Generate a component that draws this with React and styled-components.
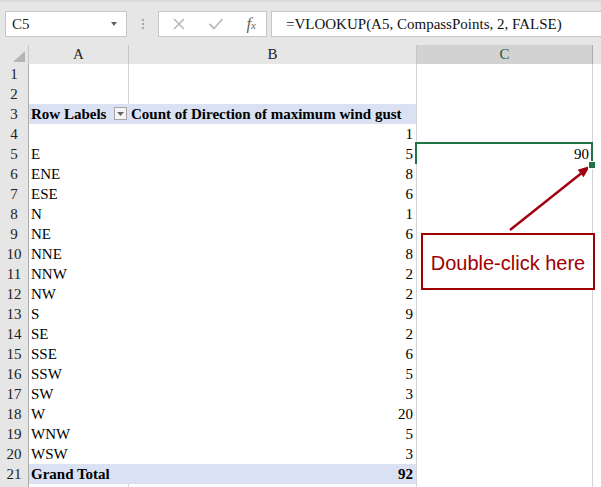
import React from "react";
import styled, { createGlobalStyle } from "styled-components";

const GlobalStyle = createGlobalStyle`
  html, body {
    margin: 0;
    padding: 0;
    background: #e6e6e6;
    overflow: hidden;
  }
  body {
    font-family: "Liberation Serif", "Times New Roman", serif;
  }
`;

const rows = [
  ["", 1],
  ["E", 5],
  ["ENE", 8],
  ["ESE", 6],
  ["N", 1],
  ["NE", 6],
  ["NNE", 8],
  ["NNW", 2],
  ["NW", 2],
  ["S", 9],
  ["SE", 2],
  ["SSE", 6],
  ["SSW", 5],
  ["SW", 3],
  ["W", 20],
  ["WNW", 5],
  ["WSW", 3],
];

const App = () => {
  return (
    <Page>
      <GlobalStyle />
      <FormulaBar>
        <NameBox>
          C5
          <Caret />
        </NameBox>
        <Grip>
          <i />
          <i />
          <i />
        </Grip>
        <Buttons>
          <svg width="14" height="14" viewBox="0 0 14 14">
            <path d="M2 2 L12 12 M12 2 L2 12" stroke="#b9b9b9" strokeWidth="1.6" />
          </svg>
          <svg width="16" height="14" viewBox="0 0 16 14">
            <path d="M1.5 7 L6 11.5 L14.5 2" stroke="#b9b9b9" strokeWidth="1.8" fill="none" />
          </svg>
          <Fx>
            f<sub>x</sub>
          </Fx>
        </Buttons>
        <Formula>=VLOOKUP(A5, CompassPoints, 2, FALSE)</Formula>
      </FormulaBar>

      <Sheet>
        <HeaderRow>
          <Corner>
            <svg width="12" height="11" viewBox="0 0 12 11">
              <polygon points="12,0 12,11 0,11" fill="#b5b5b5" />
            </svg>
          </Corner>
          <ColHead>A</ColHead>
          <ColHead>B</ColHead>
          <ColHead $active>C</ColHead>
          <ColHead $last />
        </HeaderRow>

        <Row>
          <RowHead>1</RowHead>
          <Cell />
          <Cell />
          <Cell />
          <Cell $last />
        </Row>
        <Row>
          <RowHead>2</RowHead>
          <Cell />
          <Cell />
          <Cell />
          <Cell $last />
        </Row>
        <Row>
          <RowHead>3</RowHead>
          <Cell $band $bold $noRight $blueBottom>
            Row Labels
            <FilterButton>
              <svg width="7" height="4" viewBox="0 0 7 4">
                <polygon points="0,0 7,0 3.5,4" fill="#666" />
              </svg>
            </FilterButton>
          </Cell>
          <Cell $band $bold $blueBottom>
            Count of Direction of maximum wind gust
          </Cell>
          <Cell />
          <Cell $last />
        </Row>

        {rows.map(([label, count], i) => {
          const n = i + 4;
          const lastPivot = n === 20;
          return (
            <Row key={n}>
              <RowHead>{n}</RowHead>
              <Cell $noRight $noBottom={!lastPivot} $blueBottom={lastPivot}>
                {label}
              </Cell>
              <Cell $right $noBottom={!lastPivot} $blueBottom={lastPivot}>
                {count}
              </Cell>
              {n === 5 ? (
                <Cell $right $selected>
                  90
                  <FillHandle />
                </Cell>
              ) : (
                <Cell />
              )}
              <Cell $last />
            </Row>
          );
        })}

        <Row>
          <RowHead>21</RowHead>
          <Cell $band $bold $noRight>
            Grand Total
          </Cell>
          <Cell $band $bold $right>
            92
          </Cell>
          <Cell />
          <Cell $last />
        </Row>
        <Row>
          <RowHead />
          <Cell />
          <Cell />
          <Cell />
          <Cell $last />
        </Row>
      </Sheet>

      <Arrow width="601" height="487" viewBox="0 0 601 487">
        <line x1="510" y1="230" x2="581" y2="173.5" stroke="#a00010" strokeWidth="2.4" />
        <polygon points="590,166 583.6,177.2 577.6,169.8" fill="#a00010" />
      </Arrow>
      <Callout>Double-click here</Callout>
    </Page>
  );
};

const Page = styled.div`
  position: relative;
  width: 601px;
  height: 487px;
  overflow: hidden;
  background: #e6e6e6;
`;

const FormulaBar = styled.div`
  display: flex;
  align-items: center;
  height: 45px;
  padding-left: 5px;
  box-sizing: border-box;
  border-top: 2px solid #dadada;
`;

const NameBox = styled.div`
  position: relative;
  width: 122px;
  height: 26px;
  box-sizing: border-box;
  background: #fff;
  border: 1px solid #c6c6c6;
  padding-left: 6px;
  font-size: 15px;
  line-height: 24px;
  color: #222;
`;

const Caret = styled.span`
  position: absolute;
  right: 9px;
  top: 10px;
  border-left: 3.5px solid transparent;
  border-right: 3.5px solid transparent;
  border-top: 4px solid #606060;
`;

const Grip = styled.div`
  display: flex;
  flex-direction: column;
  gap: 2px;
  width: 31px;
  align-items: center;
  i {
    display: block;
    width: 2px;
    height: 2px;
    background: #a8a8a8;
  }
`;

const Buttons = styled.div`
  display: flex;
  align-items: center;
  justify-content: space-between;
  width: 109px;
  height: 26px;
  box-sizing: border-box;
  background: #fff;
  border: 1px solid #c6c6c6;
  padding: 0 10px 0 13px;
`;

const Fx = styled.span`
  font-style: italic;
  font-size: 17px;
  color: #666;
  sub {
    font-size: 11px;
    vertical-align: baseline;
  }
`;

const Formula = styled.div`
  flex: 1;
  margin-left: 4px;
  height: 26px;
  box-sizing: border-box;
  background: #fff;
  border: 1px solid #c6c6c6;
  border-right: none;
  padding-left: 14px;
  font-size: 15px;
  line-height: 24px;
  color: #111;
  white-space: nowrap;
`;

const columns = "29px 100px 288px 176px 1fr";

const HeaderRow = styled.div`
  display: grid;
  grid-template-columns: ${columns};
  height: 19px;
`;

const Sheet = styled.div`
  display: flex;
  flex-direction: column;
  background: #fff;
`;

const Corner = styled.div`
  display: flex;
  align-items: flex-end;
  justify-content: flex-end;
  padding: 0 3px 3px 0;
  background: #e6e6e6;
  border-right: 1px solid #c6c6c6;
  border-bottom: 1px solid #ababab;
`;

const ColHead = styled.div`
  background: ${(p) => (p.$active ? "#d2d2d2" : "#e6e6e6")};
  border-right: 1px solid ${(p) => (p.$last ? "transparent" : p.$active ? "#ababab" : "#c6c6c6")};
  border-bottom: ${(p) => (p.$active ? "2px solid #217346" : "1px solid #ababab")};
  color: ${(p) => (p.$active ? "#1e5b3a" : "#222")};
  font-size: 15px;
  line-height: 19px;
  text-align: center;
`;

const Row = styled.div`
  display: grid;
  grid-template-columns: ${columns};
  height: 20px;
`;

const RowHead = styled.div`
  background: #e6e6e6;
  border-right: 1px solid #ababab;
  border-bottom: 1px solid #c6c6c6;
  color: #222;
  font-size: 15px;
  line-height: 21px;
  text-align: center;
  box-sizing: border-box;
`;

const Cell = styled.div`
  position: relative;
  box-sizing: border-box;
  background: ${(p) => (p.$band ? "#d9e1f2" : "#fff")};
  border-right: 1px solid ${(p) => (p.$noRight || p.$last ? "transparent" : "#d4d4d4")};
  border-bottom: 1px solid
    ${(p) => (p.$blueBottom ? "#8ea9db" : p.$noBottom ? "transparent" : "#d4d4d4")};
  padding: 1px 3px 0 2px;
  font-size: 15px;
  font-weight: ${(p) => (p.$bold ? 700 : 400)};
  line-height: 19px;
  color: #000;
  text-align: ${(p) => (p.$right ? "right" : "left")};
  white-space: nowrap;
  ${(p) =>
    p.$selected &&
    `
    &::after {
      content: "";
      position: absolute;
      left: -2px;
      top: -2px;
      right: -1px;
      bottom: -1px;
      border: 2px solid #217346;
      pointer-events: none;
    }
  `}
`;

const FilterButton = styled.span`
  position: absolute;
  right: 1px;
  top: 3px;
  width: 13px;
  height: 13px;
  box-sizing: border-box;
  border: 1px solid #a6a6a6;
  background: #f4f4f4;
  display: flex;
  align-items: center;
  justify-content: center;
`;

const FillHandle = styled.span`
  position: absolute;
  right: -4px;
  bottom: -4px;
  width: 6px;
  height: 6px;
  background: #217346;
  border: 1px solid #fff;
  z-index: 2;
`;

const Arrow = styled.svg`
  position: absolute;
  left: 0;
  top: 0;
  pointer-events: none;
`;

const Callout = styled.div`
  position: absolute;
  left: 421px;
  top: 233px;
  width: 174px;
  height: 57px;
  box-sizing: border-box;
  border: 2px solid #a00000;
  background: #fff;
  display: flex;
  align-items: center;
  justify-content: center;
  padding-top: 3px;
  font-family: "Liberation Sans", Arial, sans-serif;
  font-size: 20px;
  color: #a00000;
`;

export default App;
